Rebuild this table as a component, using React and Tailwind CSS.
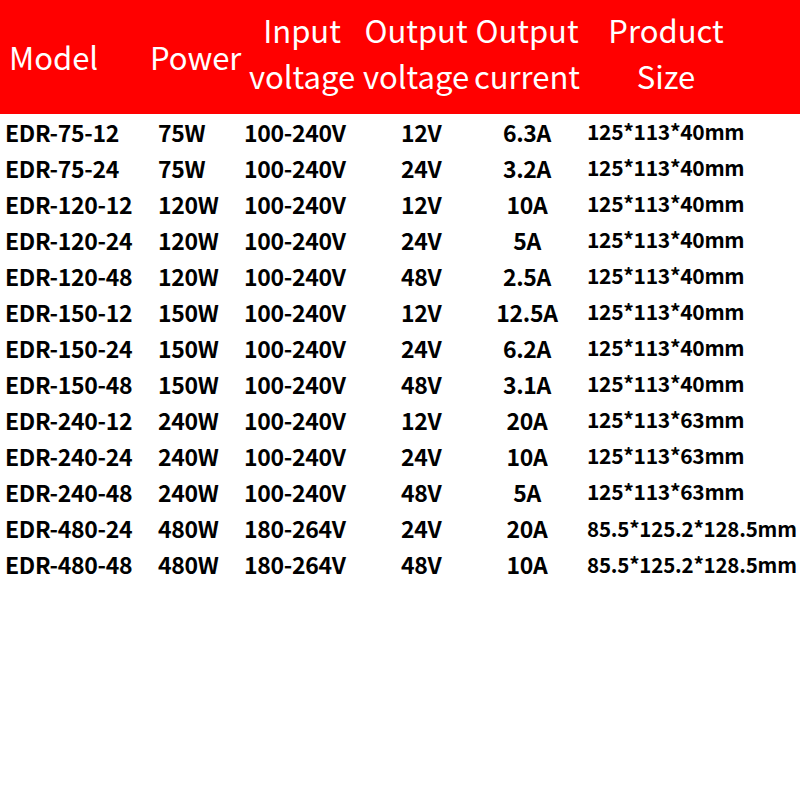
const rows = [
  ["EDR-75-12", "75W", "100-240V", "12V", "6.3A", "125*113*40mm"],
  ["EDR-75-24", "75W", "100-240V", "24V", "3.2A", "125*113*40mm"],
  ["EDR-120-12", "120W", "100-240V", "12V", "10A", "125*113*40mm"],
  ["EDR-120-24", "120W", "100-240V", "24V", "5A", "125*113*40mm"],
  ["EDR-120-48", "120W", "100-240V", "48V", "2.5A", "125*113*40mm"],
  ["EDR-150-12", "150W", "100-240V", "12V", "12.5A", "125*113*40mm"],
  ["EDR-150-24", "150W", "100-240V", "24V", "6.2A", "125*113*40mm"],
  ["EDR-150-48", "150W", "100-240V", "48V", "3.1A", "125*113*40mm"],
  ["EDR-240-12", "240W", "100-240V", "12V", "20A", "125*113*63mm"],
  ["EDR-240-24", "240W", "100-240V", "24V", "10A", "125*113*63mm"],
  ["EDR-240-48", "240W", "100-240V", "48V", "5A", "125*113*63mm"],
  ["EDR-480-24", "480W", "180-264V", "24V", "20A", "85.5*125.2*128.5mm"],
  ["EDR-480-48", "480W", "180-264V", "48V", "10A", "85.5*125.2*128.5mm"],
];

const cols = "grid grid-cols-[150px_94px_116px_112px_110px_218px]";

export default function App() {
  return (
    <div
      className="w-[800px] h-[800px] bg-white overflow-hidden"
      style={{ fontFamily: '"Noto Sans CJK SC", "Noto Sans", sans-serif' }}
    >
      {/* Header */}
      <div className={`${cols} h-[114px] items-center bg-[#ff0000] text-white text-[31px] leading-[46px] font-normal whitespace-nowrap`}>
        <div className="pl-[9px]">Model</div>
        <div>Power</div>
        <div className="text-center pb-[8px]">
          <div>Input</div>
          <div>voltage</div>
        </div>
        <div className="text-center pb-[8px]">
          <div>Output</div>
          <div>voltage</div>
        </div>
        <div className="text-center pb-[8px]">
          <div>Output</div>
          <div>current</div>
        </div>
        <div className="text-center pr-[50px] pb-[8px]">
          <div>Product</div>
          <div>Size</div>
        </div>
      </div>

      {/* Rows */}
      {rows.map((r) => (
        <div
          key={r[0]}
          className={`${cols} h-9 items-center text-black text-[23px] tracking-[-0.3px] font-bold whitespace-nowrap`}
        >
          <div className="pl-[5px]">{r[0]}</div>
          <div className="pl-[8px]">{r[1]}</div>
          <div>{r[2]}</div>
          <div className="pl-[41px]">{r[3]}</div>
          <div className="text-center">{r[4]}</div>
          <div
            className={
              r[5].length > 14
                ? "pl-[5px] text-[20.5px] tracking-[-0.2px]"
                : "pl-[5px] text-[21px]"
            }
          >
            {r[5]}
          </div>
        </div>
      ))}
    </div>
  );
}
